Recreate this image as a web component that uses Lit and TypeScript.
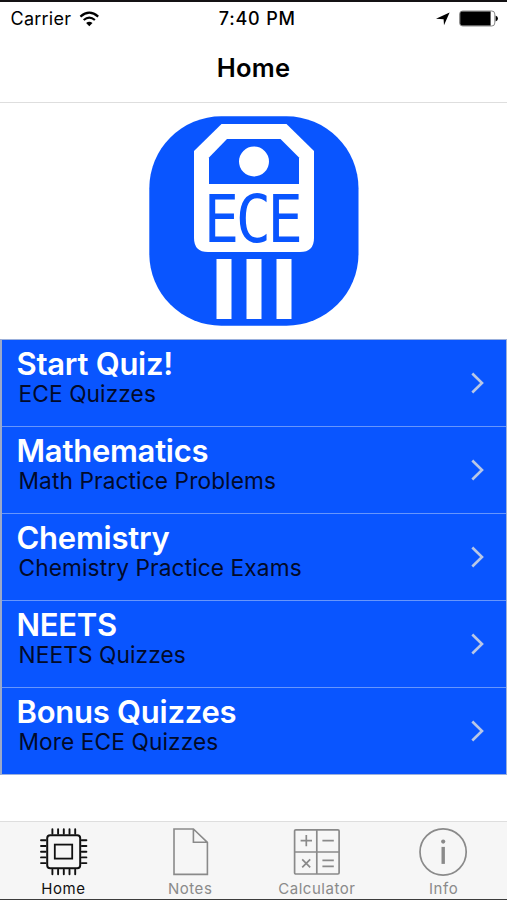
import { LitElement, html, css, svg } from "lit";
import { customElement } from "lit/decorators.js";
import { classMap } from "lit/directives/class-map.js";

const rows = [
  { title: "Start Quiz!", detail: "ECE Quizzes" },
  { title: "Mathematics", detail: "Math Practice Problems" },
  { title: "Chemistry", detail: "Chemistry Practice Exams" },
  { title: "NEETS", detail: "NEETS Quizzes" },
  { title: "Bonus Quizzes", detail: "More ECE Quizzes" },
];

const pins = [0, 5.7, 11.4, 17.1, 22.8];

const chip = svg`
  <g fill="none" stroke="currentColor" stroke-width="2">
    <rect x="8.2" y="8.2" width="33" height="33" rx="3"/>
    <rect x="15.8" y="17.6" width="17.4" height="14" stroke-width="1.8"/>
    ${pins.map((p) => svg`<path stroke-linecap="round" stroke-width="1.9" d="M${13.4 + p} 2.2v4.6M${13.4 + p} 42.7v4.6M2 ${13.3 + p}h4.6M42.8 ${13.3 + p}h4.6"/>`)}
  </g>`;
const note = svg`
  <path fill="none" stroke="currentColor" stroke-width="1.6" d="M8 2h19.4l14 13.3v32.1H8zM27.4 2v13.3h14"/>`;
const calc = svg`
  <g fill="none" stroke="currentColor" stroke-width="1.7">
    <rect x="2.6" y="2.8" width="44.5" height="44.2" rx="1.2"/>
    <path d="M24.8 2.8v44.2M2.6 25h44.5M8.6 13.6H20M14.3 7.9v11.4M30.4 13.6h11.4M10.2 32.4l8 8M18.2 32.4l-8 8M30.4 33.4h11.4M30.4 39.4h11.4"/>
  </g>`;
const info = svg`
  <circle cx="24.1" cy="25" r="23.1" fill="none" stroke="currentColor" stroke-width="1.7"/>
  <rect x="22.5" y="19.9" width="3.4" height="17" fill="currentColor"/>
  <circle cx="24.2" cy="14.6" r="2.1" fill="currentColor"/>`;

const tabs = [
  { label: "Home", icon: chip, active: true },
  { label: "Notes", icon: note, active: false },
  { label: "Calculator", icon: calc, active: false },
  { label: "Info", icon: info, active: false },
];

@customElement("app-root")
export class AppRoot extends LitElement {
  static styles = css`
    :host {
      display: flex;
      flex-direction: column;
      box-sizing: border-box;
      height: 900px;
      background: #fff;
      color: #000;
      border-top: 2px solid #141214;
      border-bottom: 1px solid #3c3c3c;
      font-family: Inter, "Liberation Sans", sans-serif;
      overflow: hidden;
    }
    svg { display: block; }
    .status {
      display: grid;
      grid-template-columns: 1fr auto 1fr;
      align-items: center;
      height: 33px;
      padding: 0 9px 0 10.5px;
      font-size: 18px;
      line-height: 33px;
    }
    .carrier { display: flex; align-items: center; gap: 8px; letter-spacing: 0.25px; }
    .time { font-weight: 550; letter-spacing: 0.8px; padding-left: 6px; }
    .right { display: flex; justify-content: flex-end; align-items: center; gap: 9px; }
    .nav {
      display: flex;
      align-items: center;
      justify-content: center;
      box-sizing: border-box;
      height: 68px;
      padding-bottom: 2px;
      border-bottom: 1px solid #dedede;
      font-size: 25.5px;
      font-weight: 600;
      letter-spacing: 0.2px;
    }
    .hero { display: flex; justify-content: center; height: 236px; padding-top: 13px; box-sizing: border-box; }
    .list {
      display: flex;
      flex-direction: column;
      box-sizing: border-box;
      height: 435.5px;
      border: 1px solid #9bb0dc;
      border-left: 2px solid #9ba9c9;
      background: #0955ff;
    }
    .row {
      flex: 1;
      display: flex;
      justify-content: space-between;
      align-items: center;
      padding: 0 22px 0 14.5px;
      border-bottom: 1px solid #6796fc;
    }
    .row:last-child { border-bottom: 0; }
    .texts { align-self: flex-start; padding-top: 8px; white-space: nowrap; }
    .title { font-size: 31px; line-height: 32px; font-weight: 600; color: #fff; letter-spacing: -0.25px; }
    .detail { font-size: 22.7px; line-height: 28px; color: #020a29; padding-left: 2px; letter-spacing: 0.1px; }
    .tabs {
      margin-top: auto;
      display: grid;
      grid-template-columns: repeat(4, 1fr);
      box-sizing: border-box;
      height: 78px;
      border-top: 1px solid #dedede;
      background: #f6f6f6;
    }
    .tab { display: flex; flex-direction: column; align-items: center; padding-top: 5px; color: #8a8a8a; }
    .tab.active { color: #111; }
    .label { font-size: 15px; line-height: 18px; margin-top: 4px; letter-spacing: 0.55px; }
  `;

  render() {
    return html`
      <div class="status">
        <div class="carrier">
          <span>Carrier</span>
          <svg width="21" height="16" viewBox="0 0 21 16">
            <g fill="none" stroke="#000" stroke-width="2.2">
              <path d="M1.4 5.6Q10.3-2.2 19.2 5.6"/>
              <path d="M4.7 9Q10.3 4.2 15.9 9"/>
            </g>
            <path d="M10.3 15.2L7.1 11.9Q10.3 9.4 13.5 11.9Z"/>
          </svg>
        </div>
        <div class="time">7:40 PM</div>
        <div class="right">
          <svg width="14" height="14" viewBox="0 0 14 14"><path d="M13.6.4L8 13.2 7.6 7.3 0 6.7Z"/></svg>
          <svg width="39" height="17" viewBox="0 0 39 17">
            <rect x=".6" y="1" width="35.2" height="15" rx="3" fill="#fff" stroke="#888"/>
            <path d="M3 1.6h28.6v13.8H3Q1.2 15.4 1.2 13.6V3.4Q1.2 1.6 3 1.6Z"/>
            <path d="M36.6 5.6Q39 6.6 39 8.5T36.6 11.4Z"/>
          </svg>
        </div>
      </div>
      <div class="nav">Home</div>
      <div class="hero">
        <svg width="210" height="210" viewBox="0 0 210 210">
          <rect x=".3" y=".3" width="209.2" height="209.4" rx="72" fill="#0955ff"/>
          <path fill="#fff" d="M72.5 8H137.5L165 35V122Q165 136 151 136H59Q45 136 45 122V35Z"/>
          <path fill="#0955ff" d="M78 23H131.5L150 41.5V68H60V41.5Z"/>
          <circle cx="105" cy="45.5" r="15" fill="#fff"/>
          <g fill="#fff">
            <rect x="67.5" y="143" width="15" height="60"/>
            <rect x="97.5" y="143" width="15" height="60"/>
            <rect x="127.5" y="143" width="15" height="60"/>
          </g>
          <text transform="translate(54.8 126) scale(.89 1)" letter-spacing="-3.9" font-family="DejaVu Sans Mono, monospace" font-size="66" fill="#0955ff">ECE</text>
        </svg>
      </div>
      <div class="list">
        ${rows.map((r) => html`
          <div class="row">
            <div class="texts">
              <div class="title">${r.title}</div>
              <div class="detail">${r.detail}</div>
            </div>
            <svg width="13" height="22" viewBox="0 0 13 22">
              <path d="M1.3 1.5L11 11 1.3 20.5" fill="none" stroke="#b9c7e6" stroke-width="2.6"/>
            </svg>
          </div>`)}
      </div>
      <div class="tabs">
        ${tabs.map((t) => html`
          <div class=${classMap({ tab: true, active: t.active })}>
            <svg width="49" height="49" viewBox="0 0 49 49">${t.icon}</svg>
            <div class="label">${t.label}</div>
          </div>`)}
      </div>
    `;
  }
}
